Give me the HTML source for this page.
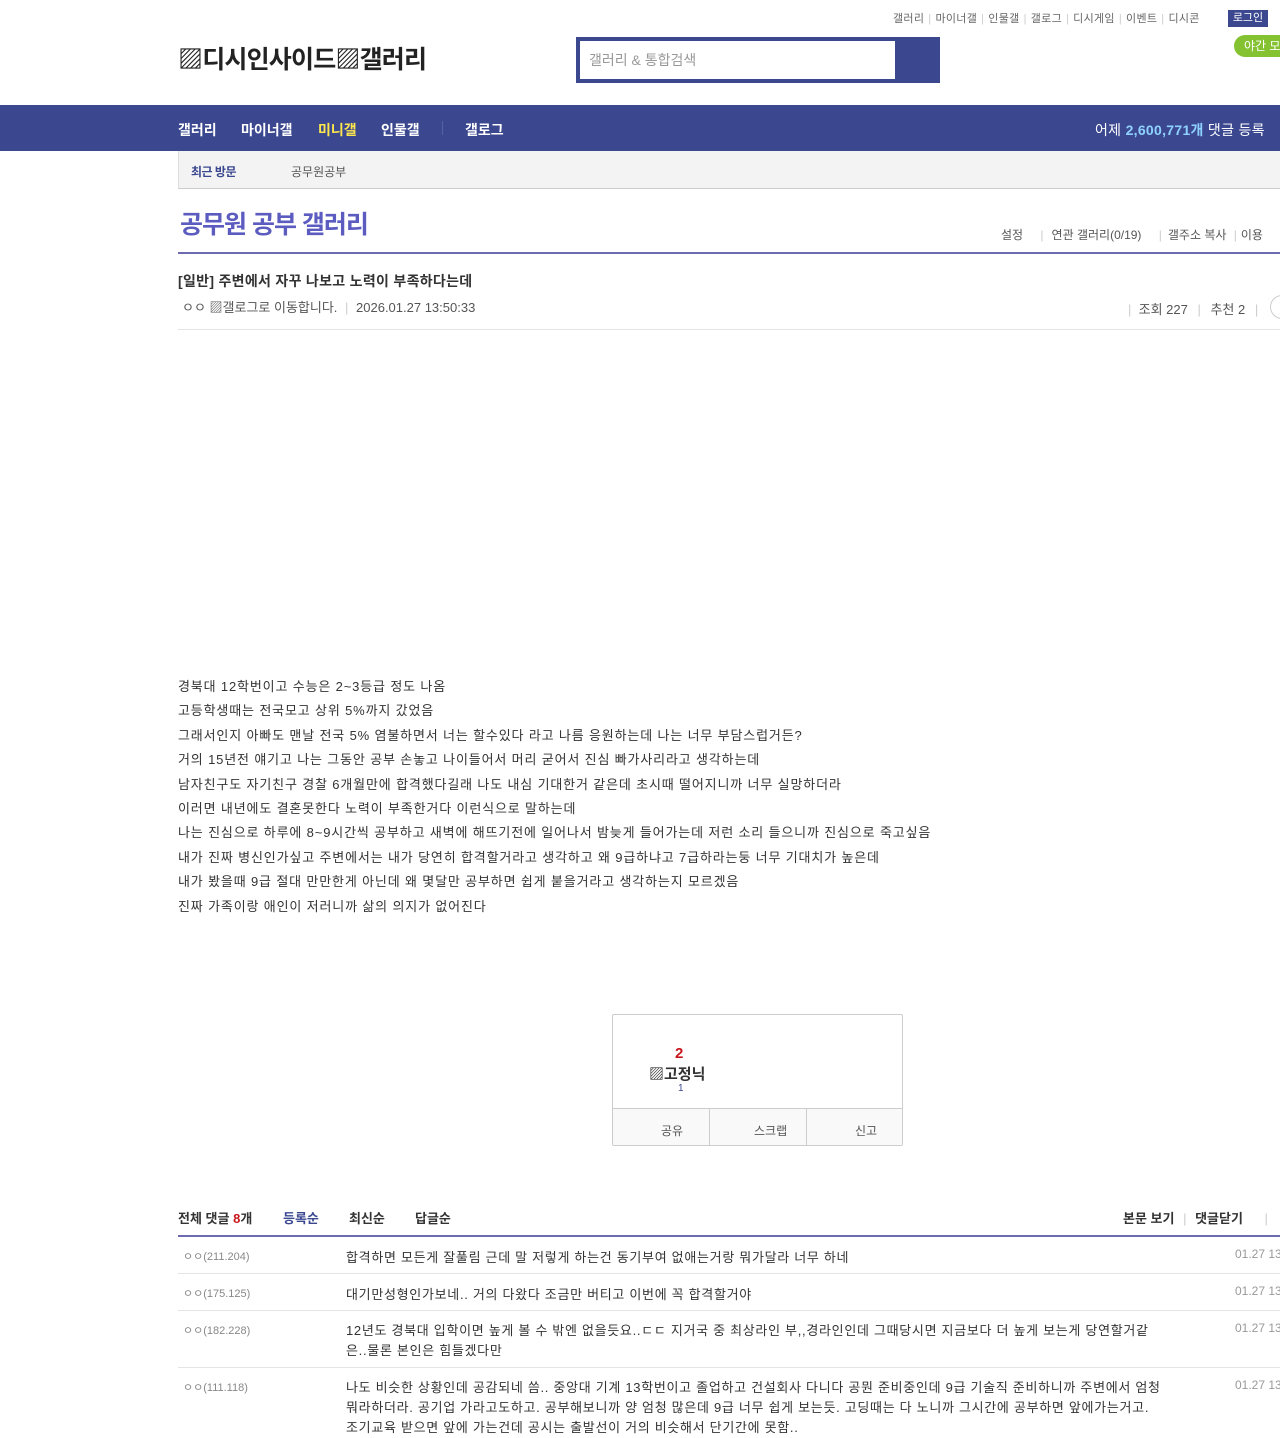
<!DOCTYPE html>
<html><head><meta charset="utf-8"><style>
*{margin:0;padding:0;box-sizing:border-box}
body{width:1280px;height:1438px;overflow:hidden;background:#fff;font-family:"Liberation Sans","Noto Sans CJK KR",sans-serif;color:#333;position:relative}
.a{position:absolute;white-space:nowrap}
.top{font-size:11px;color:#666;top:10px;left:893px;letter-spacing:0.3px}
.top span{color:#ccc;margin:0 4px}
.nav{position:absolute;top:105px;left:0;width:1280px;height:46px;background:#3b4890}
.nav .a{color:#fff;font-size:14px;font-weight:bold;top:15px}
.sub{position:absolute;top:151px;left:178px;width:1110px;height:38px;background:#f3f3f3;border-left:1px solid #ddd;border-bottom:1px solid #ccc}
.body p{font-size:13px;color:#333;line-height:24.4px;letter-spacing:0.85px}
.cm{font-size:13px;color:#333;letter-spacing:0.7px}
.ip{font-size:11px;color:#888}
.dt{font-size:12px;color:#999}
.hr{position:absolute;left:178px;width:1110px;height:1px;background:#e5e5e5}
</style></head><body>
<div class="a top">갤러리<span>|</span>마이너갤<span>|</span>인물갤<span>|</span>갤로그<span>|</span>디시게임<span>|</span>이벤트<span>|</span>디시콘</div>
<div class="a" style="left:1228px;top:10px;width:40px;height:17px;background:#3b4890;color:#fff;font-size:11px;text-align:center;line-height:17px">로그인</div>
<div class="a" style="left:1234px;top:35px;width:60px;height:22px;background:#84c232;border-radius:11px;color:#fff;font-size:12px;line-height:22px;padding-left:10px">야간 모드</div>
<div class="a" style="left:178px;top:40px;font-size:25px;font-weight:bold;color:#222;letter-spacing:-0.8px">▨디시인사이드▨갤러리</div>
<div class="a" style="left:576px;top:37px;width:364px;height:46px;background:#3b4890"></div>
<div class="a" style="left:580px;top:41px;width:315px;height:38px;background:#fff;font-size:14px;color:#999;line-height:38px;padding-left:9px">갤러리 &amp; 통합검색</div>
<div class="nav">
<div class="a" style="left:178px">갤러리</div>
<div class="a" style="left:241px">마이너갤</div>
<div class="a" style="left:318px;color:#ffe84c">미니갤</div>
<div class="a" style="left:381px">인물갤</div>
<div class="a" style="left:442px;top:16px;width:1px;height:14px;background:#5561a0"></div>
<div class="a" style="left:465px">갤로그</div>
<div class="a" style="left:1095px;font-weight:normal;letter-spacing:0.3px">어제 <b style="color:#8fd2ff">2,600,771개</b> 댓글 등록</div>
</div>
<div class="sub">
<div class="a" style="left:12px;top:12px;font-size:12px;color:#3b4890;font-weight:bold;letter-spacing:-0.5px">최근 방문</div>
<div class="a" style="left:112px;top:12px;font-size:12px;color:#555">공무원공부</div>
</div>
<div class="a" style="left:180px;top:205px;font-size:25px;font-weight:bold;color:#5b5bc0;letter-spacing:-1px">공무원 공부 갤러리</div>
<div class="a" style="left:1001px;top:226px;font-size:12px;color:#555">설정 <span style="color:#ccc;margin:0 8px 0 14px">|</span>연관 갤러리(0/19) <span style="color:#ccc;margin:0 6px 0 14px">|</span>갤주소 복사 <span style="color:#ccc;margin:0 4px">|</span>이용</div>
<div class="a" style="left:178px;top:252px;width:1110px;height:2px;background:#6e6bb0"></div>
<div class="a" style="left:178px;top:271px;font-size:14px;font-weight:bold;color:#333;letter-spacing:0.3px">[일반] 주변에서 자꾸 나보고 노력이 부족하다는데</div>
<div class="a" style="left:182px;top:297px;font-size:13px;color:#555">ㅇㅇ ▨갤로그로 이동합니다. <span style="color:#ccc;margin:0 4px">|</span> 2026.01.27 13:50:33</div>
<div class="a" style="left:1128px;top:299px;font-size:13px;color:#555"><span style="color:#ccc">|</span>&nbsp; 조회 227 <span style="color:#ccc;margin:0 6px">|</span> 추천 2 <span style="color:#ccc;margin:0 6px">|</span></div>
<div class="a" style="left:1270px;top:295px;width:24px;height:24px;border:1px solid #ccc;border-radius:12px"></div>
<div class="hr" style="top:329px"></div>
<div class="a body" style="left:178px;top:675px">
<p>경북대 12학번이고 수능은 2~3등급 정도 나옴</p>
<p>고등학생때는 전국모고 상위 5%까지 갔었음</p>
<p>그래서인지 아빠도 맨날 전국 5% 염불하면서 너는 할수있다 라고 나름 응원하는데 나는 너무 부담스럽거든?</p>
<p>거의 15년전 얘기고 나는 그동안 공부 손놓고 나이들어서 머리 굳어서 진심 빠가사리라고 생각하는데</p>
<p>남자친구도 자기친구 경찰 6개월만에 합격했다길래 나도 내심 기대한거 같은데 초시때 떨어지니까 너무 실망하더라</p>
<p>이러면 내년에도 결혼못한다 노력이 부족한거다 이런식으로 말하는데</p>
<p>나는 진심으로 하루에 8~9시간씩 공부하고 새벽에 해뜨기전에 일어나서 밤늦게 들어가는데 저런 소리 들으니까 진심으로 죽고싶음</p>
<p>내가 진짜 병신인가싶고 주변에서는 내가 당연히 합격할거라고 생각하고 왜 9급하냐고 7급하라는둥 너무 기대치가 높은데</p>
<p>내가 봤을때 9급 절대 만만한게 아닌데 왜 몇달만 공부하면 쉽게 붙을거라고 생각하는지 모르겠음</p>
<p>진짜 가족이랑 애인이 저러니까 삶의 의지가 없어진다</p>
</div>
<div class="a" style="left:612px;top:1014px;width:291px;height:132px;border:1px solid #ccc;border-radius:2px"></div>
<div class="a" style="left:675px;top:1045px;font-size:15px;font-weight:bold;color:#c8171e">2</div>
<div class="a" style="left:649px;top:1063px;font-size:15px;font-weight:bold;color:#333">▨고정닉</div>
<div class="a" style="left:678px;top:1083px;font-size:10px;color:#3b4890">1</div>
<div class="a" style="left:613px;top:1108px;width:289px;height:37px;background:#f9f9f9;border-top:1px solid #ccc"></div>
<div class="a" style="left:709px;top:1108px;width:1px;height:37px;background:#ccc"></div>
<div class="a" style="left:806px;top:1108px;width:1px;height:37px;background:#ccc"></div>
<div class="a" style="left:661px;top:1122px;font-size:12px;color:#555">공유</div>
<div class="a" style="left:754px;top:1122px;font-size:12px;color:#555">스크랩</div>
<div class="a" style="left:855px;top:1122px;font-size:12px;color:#555">신고</div>
<div class="a" style="left:178px;top:1208px;font-size:13px;font-weight:bold;color:#333">전체 댓글 <span style="color:#c8171e">8</span>개</div>
<div class="a" style="left:283px;top:1208px;font-size:13px;font-weight:bold;color:#3b4890">등록순</div>
<div class="a" style="left:349px;top:1208px;font-size:13px;font-weight:bold;color:#333">최신순</div>
<div class="a" style="left:415px;top:1208px;font-size:13px;font-weight:bold;color:#333">답글순</div>
<div class="a" style="left:1123px;top:1208px;font-size:13px;font-weight:bold;color:#333">본문 보기 <span style="color:#ccc;font-weight:normal;margin:0 5px">|</span> 댓글닫기 <span style="color:#ccc;font-weight:normal;margin:0 10px 0 18px">|</span></div>
<div class="a" style="left:178px;top:1235px;width:1110px;height:2px;background:#6e6bb0"></div>
<div class="a ip" style="left:183px;top:1248px">ㅇㅇ(211.204)</div>
<div class="a cm" style="left:346px;top:1247px">합격하면 모든게 잘풀림 근데 말 저렇게 하는건 동기부여 없애는거랑 뭐가달라 너무 하네</div>
<div class="a dt" style="left:1235px;top:1247px">01.27 13:55</div>
<div class="hr" style="top:1273px"></div>
<div class="a ip" style="left:183px;top:1285px">ㅇㅇ(175.125)</div>
<div class="a cm" style="left:346px;top:1284px">대기만성형인가보네.. 거의 다왔다 조금만 버티고 이번에 꼭 합격할거야</div>
<div class="a dt" style="left:1235px;top:1284px">01.27 13:56</div>
<div class="hr" style="top:1310px"></div>
<div class="a ip" style="left:183px;top:1322px">ㅇㅇ(182.228)</div>
<div class="a cm" style="left:346px;top:1321px;line-height:20px">12년도 경북대 입학이면 높게 볼 수 밖엔 없을듯요..ㄷㄷ 지거국 중 최상라인 부,,경라인인데 그때당시면 지금보다 더 높게 보는게 당연할거같<br>은..물론 본인은 힘들겠다만</div>
<div class="a dt" style="left:1235px;top:1321px">01.27 13:58</div>
<div class="hr" style="top:1367px"></div>
<div class="a ip" style="left:183px;top:1379px">ㅇㅇ(111.118)</div>
<div class="a cm" style="left:346px;top:1378px;line-height:20px">나도 비슷한 상황인데 공감되네 씀.. 중앙대 기계 13학번이고 졸업하고 건설회사 다니다 공뭔 준비중인데 9급 기술직 준비하니까 주변에서 엄청<br>뭐라하더라. 공기업 가라고도하고. 공부해보니까 양 엄청 많은데 9급 너무 쉽게 보는듯. 고딩때는 다 노니까 그시간에 공부하면 앞에가는거고.<br>조기교육 받으면 앞에 가는건데 공시는 출발선이 거의 비슷해서 단기간에 못함..</div>
<div class="a dt" style="left:1235px;top:1378px">01.27 13:59</div>
</body></html>
